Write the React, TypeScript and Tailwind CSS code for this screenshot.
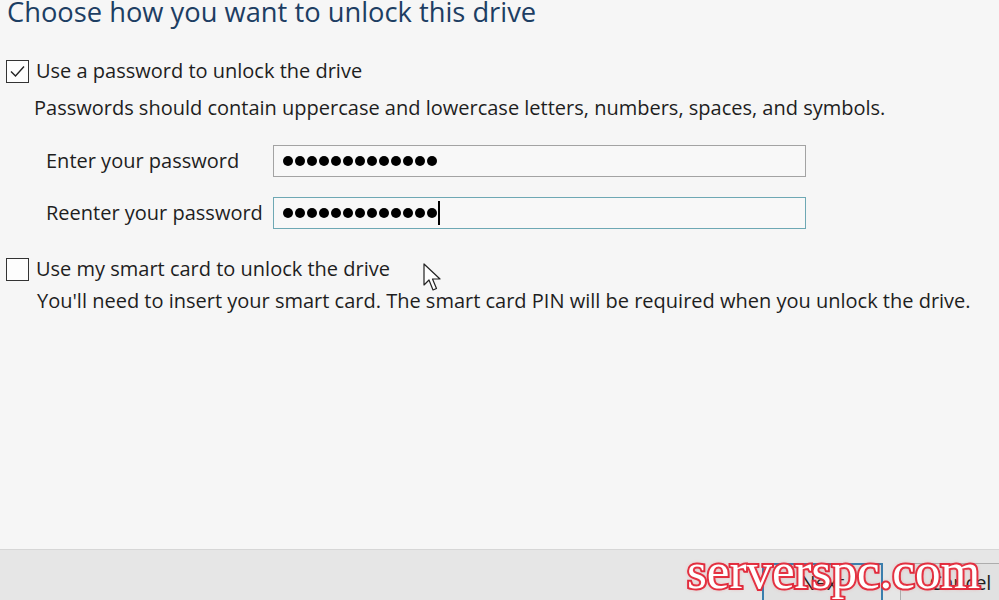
import React from "react";

const font = { fontFamily: '"Open Sans", "Noto Sans", sans-serif' };

function CheckBox({ checked }: { checked: boolean }) {
  return (
    <div className="flex h-[23px] w-[23px] shrink-0 items-center justify-center border border-[#333333] bg-[#fdfdfd]">
      {checked && (
        <svg width="17" height="17" viewBox="0 0 17 17" fill="none">
          <path d="M2 8.5 L6.5 13 L15 3.5" stroke="#222" strokeWidth="1.4" />
        </svg>
      )}
    </div>
  );
}

function PasswordBox({ count, focused }: { count: number; focused?: boolean }) {
  return (
    <div
      className={`flex h-[32px] w-[533px] items-center border pl-[9px] ${
        focused ? "border-[#6ea8b4]" : "border-[#a3a3a3]"
      } bg-[#f8f8f8]`}
    >
      <div className="flex gap-[2px]">
        {Array.from({ length: count }, (_, i) => (
          <span key={i} className="h-[10px] w-[10px] rounded-full bg-black" />
        ))}
      </div>
      {focused && <span className="ml-[1px] h-[24px] w-[2px] bg-black" />}
    </div>
  );
}

export default function App() {
  return (
    <div
      className="relative flex h-[600px] w-[999px] flex-col overflow-hidden bg-[#f6f6f6] text-[#1e1e1e]"
      style={font}
    >
      <div className="flex flex-1 flex-col text-[20px] leading-[26px]">
        <h1 className="-mt-[2px] pl-[7px] text-[27.3px] leading-[28px] font-normal text-[#1d3e63]">
          Choose how you want to unlock this drive
        </h1>

        <div className="mt-[32px] flex items-center gap-[7px] pl-[6px]">
          <CheckBox checked />
          <span>Use a password to unlock the drive</span>
        </div>

        <p className="mt-[11px] pl-[34px]">
          Passwords should contain uppercase and lowercase letters, numbers, spaces, and symbols.
        </p>

        <div className="mt-[24px] flex flex-col gap-[20px] pl-[46px]">
          <div className="flex items-center">
            <span className="w-[227px]">Enter your password</span>
            <PasswordBox count={13} />
          </div>
          <div className="flex items-center">
            <span className="w-[227px]">Reenter your password</span>
            <PasswordBox count={13} focused />
          </div>
        </div>

        <div className="mt-[27px] flex items-center gap-[7px] pl-[6px]">
          <CheckBox checked={false} />
          <span>Use my smart card to unlock the drive</span>
        </div>

        <p className="mt-[6px] pl-[37px]">
          You'll need to insert your smart card. The smart card PIN will be required when you unlock the drive.
        </p>
      </div>

      <div className="flex h-[51px] items-start justify-end gap-[17px] border-t border-[#d6d6d6] bg-[#e6e6e6] pt-[13px]">
        <button className="h-[40px] w-[121px] border-2 border-[#3a7fae] bg-[#e1e1e1] text-[20px] text-[#1e1e1e]">
          Next
        </button>
        <button className="-mr-[22px] h-[40px] w-[121px] border border-[#adadad] bg-[#e1e1e1] text-[20px] text-[#1e1e1e]">
          Cancel
        </button>
      </div>

      {/* mouse pointer */}
      <svg className="absolute left-[423px] top-[263px]" width="22" height="30" viewBox="0 0 22 30">
        <path
          d="M1 1 L1 22 L6 17 L10 27 L13.5 25.5 L9.5 16 L17 16 Z"
          fill="#fff"
          stroke="#222"
          strokeWidth="1.2"
          strokeLinejoin="round"
        />
      </svg>

      {/* watermark */}
      <div
        className="pointer-events-none absolute left-[687px] top-[541px] text-[51px] leading-[60px] text-white"
        style={{
          fontFamily: '"Liberation Serif", serif',
          WebkitTextStroke: "4px #e0283a",
          paintOrder: "stroke fill",
          textShadow: "0 0 4px rgba(240,80,90,0.8)",
        }}
      >
        serverspc.com
      </div>
    </div>
  );
}
